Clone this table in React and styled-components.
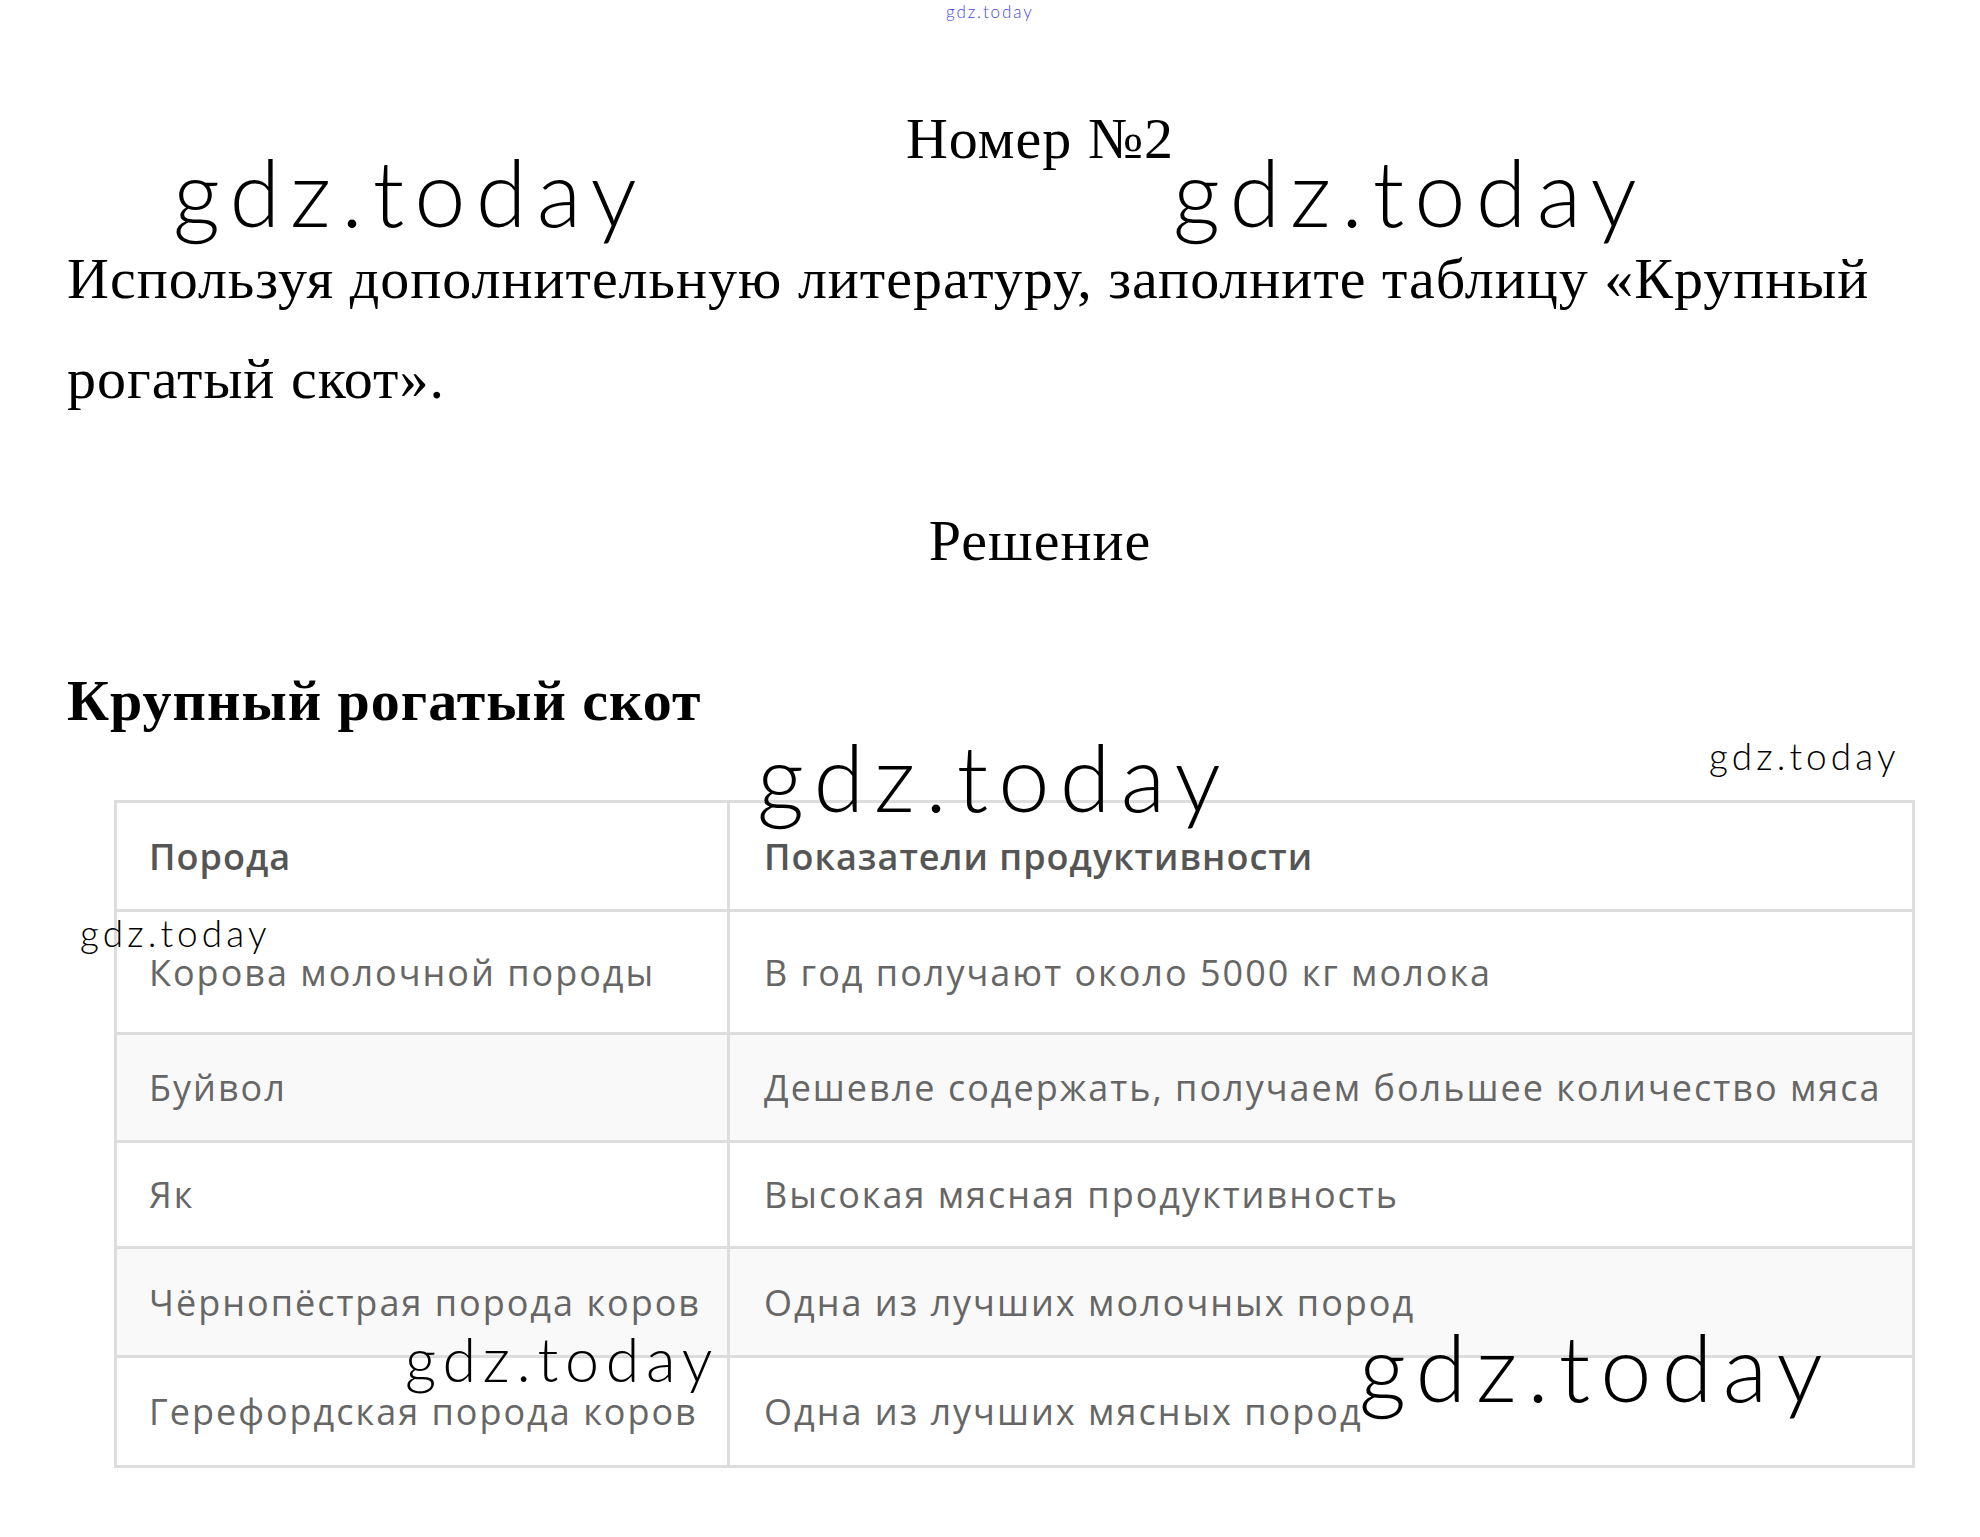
import React from 'react'
import styled, { createGlobalStyle } from 'styled-components'

const GlobalStyle = createGlobalStyle`
  html, body {
    margin: 0;
    padding: 0;
    background: #fff;
  }
  body {
    font-family: "Liberation Serif", "Times New Roman", serif;
    color: #000;
  }
`

const rows = [
  { breed: 'Корова молочной породы', info: 'В год получают около 5000 кг молока', h: 123 },
  { breed: 'Буйвол', info: 'Дешевле содержать, получаем большее количество мяса', h: 108, striped: true },
  { breed: 'Як', info: 'Высокая мясная продуктивность', h: 106 },
  { breed: 'Чёрнопёстрая порода коров', info: 'Одна из лучших молочных пород', h: 109, striped: true },
  { breed: 'Герефордская порода коров', info: 'Одна из лучших мясных пород', h: 110 },
]

// watermarks lie over the content, so they are placed on the page
// x = left edge, y = top of the line box, size = font size
const marks = [
  { x: 946, y: 3, size: 17, blue: true },
  { x: 173, y: 146, size: 92 },
  { x: 1173, y: 146, size: 92 },
  { x: 757, y: 731, size: 92 },
  { x: 1709, y: 737, size: 37 },
  { x: 80, y: 914, size: 37 },
  { x: 405, y: 1328, size: 61 },
  { x: 1359, y: 1321, size: 92 },
]

const App = () => {
  return (
    <Page>
      <GlobalStyle />
      <Title>Номер №2</Title>
      <Task>
        Используя дополнительную литературу, заполните таблицу «Крупный рогатый скот».
      </Task>
      <Title $gap={79}>Решение</Title>
      <Heading>Крупный рогатый скот</Heading>
      <Table>
        <Row $h={109}>
          <HeadCell $first>Порода</HeadCell>
          <HeadCell>Показатели продуктивности</HeadCell>
        </Row>
        {rows.map((r) => (
          <Row key={r.breed} $h={r.h} $striped={r.striped}>
            <Cell $first>{r.breed}</Cell>
            <Cell>{r.info}</Cell>
          </Row>
        ))}
      </Table>
      {marks.map((m, i) => (
        <Mark key={i} $size={m.size} $blue={m.blue} style={{ left: m.x, top: m.y }}>
          gdz.today
        </Mark>
      ))}
    </Page>
  )
}

export default App

const Page = styled.div`
position: relative;
width: 1980px;
min-height: 1537px;
box-sizing: border-box;
padding: 106px 0 0 67px;
overflow: hidden;
`

const Title = styled.div`
font-size: 58px;
letter-spacing: 1px;
line-height: 66px;
text-align: center;
padding-left: 33px;
margin-top: ${(p) => (p.$gap ? p.$gap + 'px' : '0')};
`

const Task = styled.p`
margin: 57px 0 0 0;
font-size: 58px;
letter-spacing: 1px;
line-height: 100px;
width: 1860px;
`

const Heading = styled.div`
margin-top: 94px;
font-size: 58px;
letter-spacing: 1px;
line-height: 66px;
font-weight: bold;
`

const Table = styled.div`
margin: 66px 0 0 47px;
width: 1801px;
border-left: 3px solid #ddd;
border-top: 3px solid #ddd;
box-sizing: border-box;
`

const Row = styled.div`
display: grid;
grid-template-columns: 613px 1fr;
height: ${(p) => p.$h}px;
background: ${(p) => (p.$striped ? '#f9f9f9' : '#fff')};
box-sizing: border-box;
border-bottom: 3px solid #ddd;
`

const Cell = styled.div`
display: flex;
align-items: center;
padding-left: ${(p) => (p.$first ? '32px' : '34px')};
border-right: 3px solid #ddd;
font-family: "Open Sans", "Liberation Sans", Arial, sans-serif;
font-size: 36px;
letter-spacing: 2px;
color: #666;
white-space: nowrap;
`

const HeadCell = styled(Cell)`
font-weight: 600;
letter-spacing: 1px;
color: #555;
`

const Mark = styled.div`
position: absolute;
font-family: Lato, "DejaVu Sans", sans-serif;
font-weight: 300;
font-size: ${(p) => p.$size}px;
letter-spacing: 0.11em;
line-height: 1;
color: ${(p) => (p.$blue ? '#4646e6' : '#000')};
white-space: nowrap;
pointer-events: none;
`
